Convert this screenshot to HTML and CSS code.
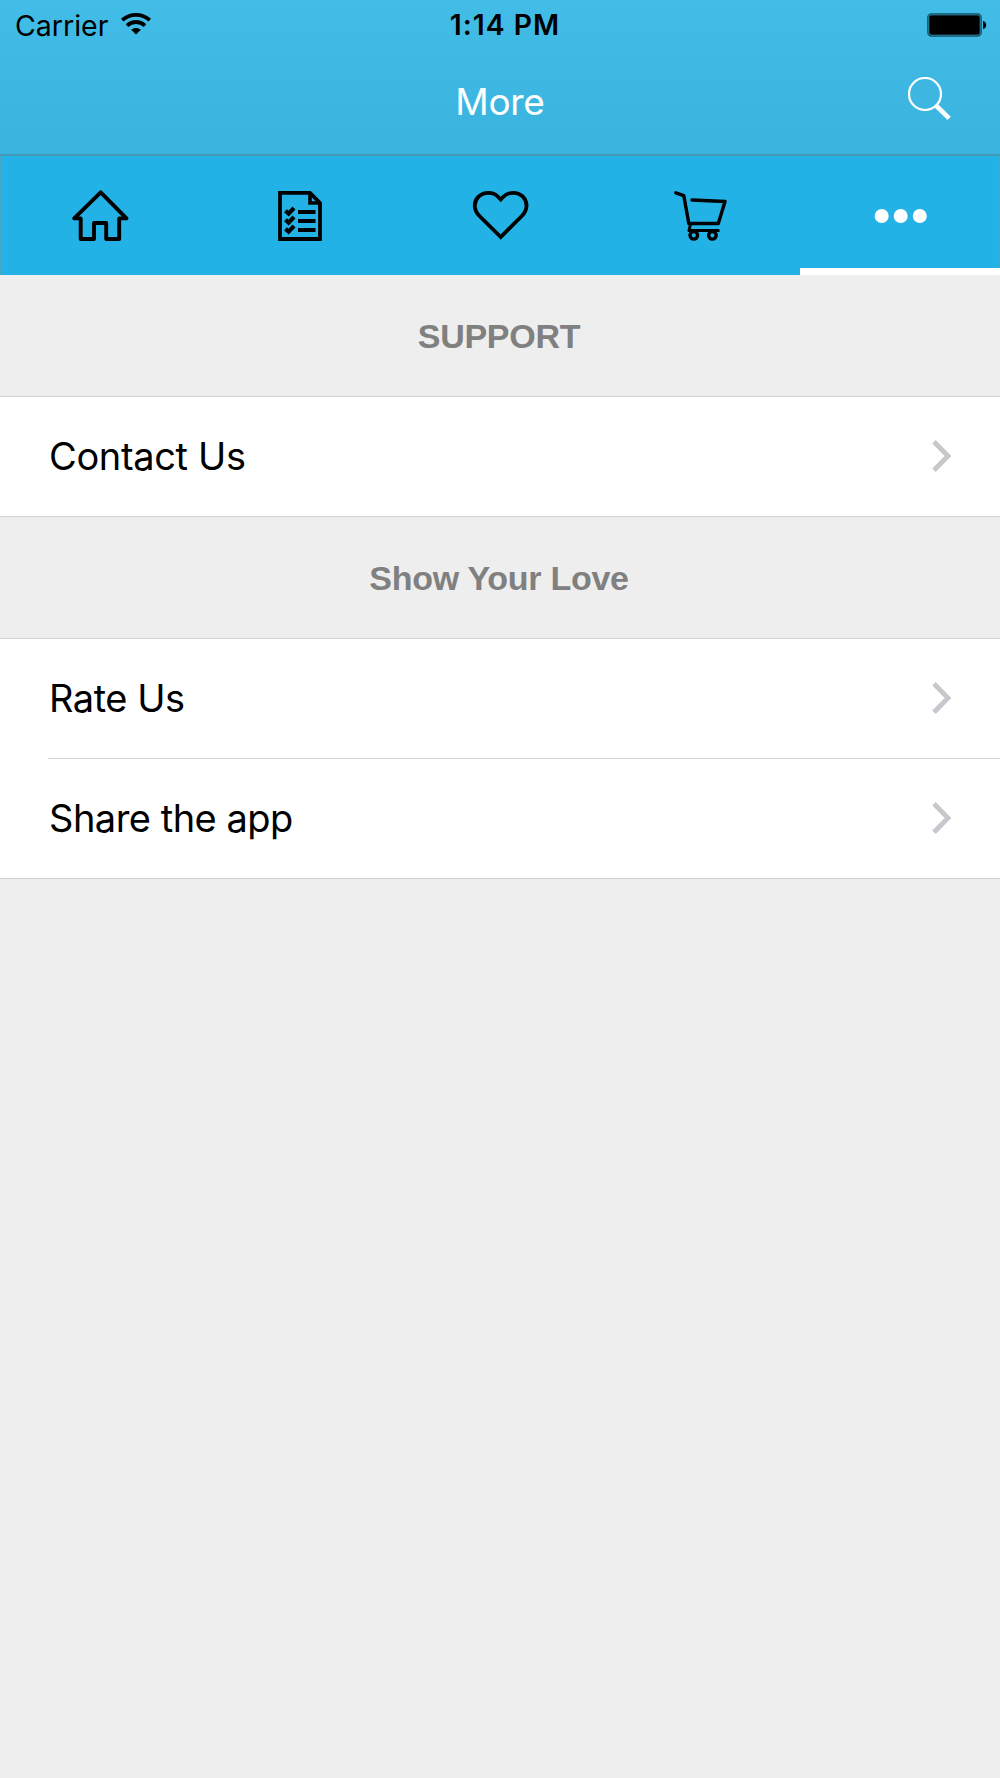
FILE: index.html
```html
<!DOCTYPE html>
<html lang="en">
<head>
<meta charset="utf-8">
<title>More</title>
<link rel="stylesheet" href="styles.css">
</head>
<body>
<header class="header">
  <div class="status">
    <div class="status-left">
      <span class="carrier">Carrier</span>
      <svg class="wifi" width="30" height="22" viewBox="0 0 30 22" fill="none" stroke="#000">
        <path d="M1.2 7.2C9 .2 21 .2 28.8 7.2" stroke-width="3.8"/>
        <path d="M6 12.600C11.400 7.800 18.600 7.800 24 12.600" stroke-width="3.8"/>
        <path d="M15 21.500L10.200 16.800C13 14.300 17 14.300 19.800 16.800Z" fill="#000" stroke="none"/>
      </svg>
    </div>
    <span class="time">1:14 PM</span>
    <div class="status-right">
      <svg class="battery" width="60" height="24" viewBox="0 0 60 24">
        <rect x=".9" y=".9" width="53.200" height="22.200" rx="3.500" fill="none" stroke="#155269" stroke-width="1.500"/>
        <rect x="2.200" y="2.200" width="50.600" height="19.600" rx="2"/>
        <path d="M56 8C60.300 9 60.300 15 56 16Z"/>
      </svg>
    </div>
  </div>
  <div class="navbar">
    <h1 class="title">More</h1>
    <svg class="search" width="44" height="44" viewBox="0 0 44 44" fill="none" stroke="#fff">
      <circle cx="17" cy="17" r="16" stroke-width="2.2"/>
      <path d="M27.500 28L41.200 41.300" stroke-width="4.600"/>
    </svg>
  </div>
</header>
<nav class="tabs">
  <a class="tab">
    <svg width="100" height="90" viewBox="0 0 100 90" fill="none" stroke="#000" stroke-width="3.900" stroke-linejoin="round">
      <path d="M50.700 22.400L24.200 48.400H30.700V69H44V53H56.200V69H69.200V48.400H76.500Z"/>
    </svg>
  </a>
  <a class="tab">
    <svg width="100" height="90" viewBox="0 0 100 90" fill="none" stroke="#000" stroke-width="3.800">
      <path d="M30 22.900H60L70 33V69H30Z"/>
      <path d="M60 22.900V33H70" stroke-width="3.600"/>
      <path d="M48 42H65.500M48 51H65.500M48 60H65.500"/>
      <path d="M35.500 40.800L38.600 43.600L44 38M35.500 49.800L38.600 52.600L44 47M35.500 58.800L38.600 61.600L44 56" stroke-width="4.2"/>
    </svg>
  </a>
  <a class="tab">
    <svg width="100" height="90" viewBox="0 0 100 90" fill="none" stroke="#000" stroke-width="3.800">
      <path d="M50.700 67L29.500 46C23.500 40 23.300 32 28.500 26.700C34 21.500 43 21.500 48 26.700L50.700 29.500L53.400 26.700C58.500 21.500 67.500 21.500 73 26.700C78 32 77.800 40 71.800 46Z"/>
    </svg>
  </a>
  <a class="tab">
    <svg width="100" height="90" viewBox="0 0 100 90" fill="none" stroke="#000" stroke-width="3.400" stroke-linecap="round" stroke-linejoin="round">
      <path d="M25.800 22.800L33.800 25.600L38.800 53.500H68.300L75 31.500L42 30"/>
      <path d="M40.500 54L39 60.600H68.300" stroke-width="3"/>
      <circle cx="43.800" cy="65.300" r="3.800"/>
      <circle cx="62.400" cy="65.300" r="3.800"/>
    </svg>
  </a>
  <a class="tab tab-active">
    <svg width="100" height="90" viewBox="0 0 100 90" fill="#fff">
      <circle cx="31.700" cy="46" r="7"/><circle cx="50.700" cy="46" r="7"/><circle cx="69.800" cy="46" r="7"/>
    </svg>
  </a>
</nav>
<main>
  <h2 class="section">SUPPORT</h2>
  <div class="group">
    <a class="row"><span class="contact">Contact Us</span><svg class="chevron" width="20" height="32" viewBox="0 0 20 32"><path d="M2 1.800L16 16L2 30.200"/></svg></a>
  </div>
  <h2 class="section">Show Your Love</h2>
  <div class="group">
    <a class="row"><span class="rate">Rate Us</span><svg class="chevron" width="20" height="32" viewBox="0 0 20 32"><path d="M2 1.800L16 16L2 30.200"/></svg></a>
    <div class="divider"></div>
    <a class="row"><span class="share">Share the app</span><svg class="chevron" width="20" height="32" viewBox="0 0 20 32"><path d="M2 1.800L16 16L2 30.200"/></svg></a>
  </div>
</main>
</body>
</html>
```
FILE: styles.css
```css
* { box-sizing: border-box; }
body {
  margin: 0;
  min-height: 1778px;
  background: #eee;
  color: #000;
  font-family: Inter, "Liberation Sans", sans-serif;
}
h1, h2 { margin: 0; }
svg { display: block; flex: none; }
.header {
  height: 156px;
  border-bottom: 2px solid #4798b7;
  background: linear-gradient(#42bde8, #3ab3de);
}
.status {
  height: 50px;
  display: grid;
  grid-template-columns: 1fr auto 1fr;
  align-items: center;
  padding: 0 13px 0 15px;
}
.status-left { display: flex; align-items: center; }
.carrier { font-size: 28.5px; line-height: 50px; }
.wifi { margin: -3px 0 0 13px; }
.time { font-size: 28.3px; line-height: 51px; font-weight: 600; padding-left: 8px; letter-spacing: 1px; }
.status-right { display: flex; justify-content: flex-end; }
.battery { margin-top: -2px; }
.navbar {
  height: 104px;
  display: grid;
  grid-template-columns: 1fr auto 1fr;
  align-items: center;
  padding-right: 48px;
  padding-left: 48px;
}
.title { grid-column: 2; color: #fff; font-size: 37px; line-height: 104px; font-weight: 400; letter-spacing: -.3px; }
.search { justify-self: end; margin-top: -6px; }
.tabs {
  height: 119px;
  display: grid;
  grid-template-columns: repeat(5, 1fr);
  background: #23b2e6;
  box-shadow: inset 1px 0 #4fa5c4, inset -1px 0 #4fa5c4;
}
.tab { display: flex; justify-content: center; padding-top: 14px; }
.tab-active { border-bottom: 7px solid #fff; }
.section {
  height: 121px;
  padding: 3px 2px 0 0;
  color: #808080;
  font: bold 34px/117px "Liberation Sans", sans-serif;
  letter-spacing: -.27px;
  text-align: center;
}
.group { background: #fff; border-top: 1px solid #d0d0d5; border-bottom: 1px solid #d0d0d5; }
.row {
  height: 119px;
  display: flex;
  align-items: flex-start;
  justify-content: space-between;
  padding: 0 48px 0 49px;
  font-size: 38px;
  line-height: 118px;
}
.contact { letter-spacing: -.35px; }
.rate { letter-spacing: -.45px; }
.share { letter-spacing: -.5px; }
.divider { height: 1px; margin-left: 48px; background: #d6d6d9; }
.chevron { fill: none; stroke: #c7c7cc; stroke-width: 4.8; margin-top: 43px; }
```
